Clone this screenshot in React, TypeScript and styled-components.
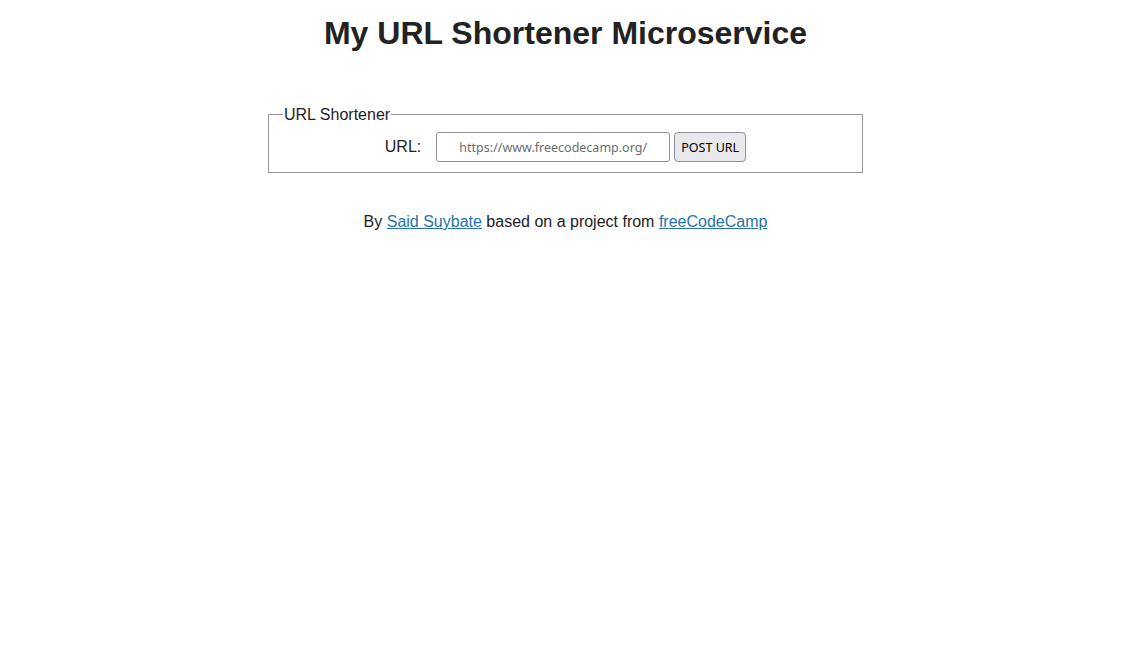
import React from "react";
import styled, { createGlobalStyle } from "styled-components";

const Global = createGlobalStyle`
  html, body { margin: 0; padding: 0; background: #ffffff; }
  body {
    font-family: "Liberation Sans", Arial, Helvetica, sans-serif;
    font-size: 16px;
    color: #222;
    text-align: center;
  }
`;

const Page = styled.div`
  display: flex;
  flex-direction: column;
  align-items: center;
  padding-top: 15px;
`;

const Title = styled.h1`
  margin: 0;
  font-size: 32px;
  line-height: 37px;
  font-weight: 700;
  color: #222;
`;

const Fieldset = styled.fieldset`
  box-sizing: border-box;
  width: 595px;
  margin: 52px 0 0;
  padding: 8px 0 10px;
  border: 1px solid #9a9a9a;
  display: flex;
  justify-content: center;
`;

const Legend = styled.legend`
  padding: 2px 1px 0;
  margin-left: 14px;
  font-size: 16px;
  line-height: 18px;
  color: #222;
  text-align: left;
`;

const Form = styled.form`
  display: flex;
  align-items: center;
  gap: 4px;
  margin: 0;
`;

const Label = styled.label`
  font-size: 16px;
  color: #222;
  margin-right: 11px;
`;

const Input = styled.input`
  box-sizing: border-box;
  width: 234px;
  height: 30px;
  padding: 5px 10px;
  border: 1px solid #8f8f9d;
  border-radius: 3px;
  font-family: "Noto Sans", sans-serif;
  font-size: 12.5px;
  text-align: center;
  color: #222;
  background: #fff;
  &::placeholder { color: #6d6d6d; }
`;

const Button = styled.button`
  box-sizing: border-box;
  height: 30px;
  width: 72px;
  padding: 0 6px;
  border: 1px solid #8f8f9d;
  border-radius: 4px;
  background: #e9e9ed;
  font-family: "Noto Sans", sans-serif;
  font-size: 12.5px;
  color: #000;
`;

const Footer = styled.p`
  margin: 40px 0 0;
  font-size: 16px;
  line-height: 18px;
  color: #222;
`;

const Link = styled.a`
  color: #2574a9;
`;

export default function App() {
  return (
    <>
      <Global />
      <Page>
        <Title>My URL Shortener Microservice</Title>
        <Fieldset>
          <Legend>URL Shortener</Legend>
          <Form onSubmit={(e) => e.preventDefault()}>
            <Label htmlFor="url_input">URL:</Label>
            <Input id="url_input" type="text" placeholder="https://www.freecodecamp.org/" />
            <Button type="submit">POST URL</Button>
          </Form>
        </Fieldset>
        <Footer>
          By <Link href="#">Said Suybate</Link> based on a project from{" "}
          <Link href="#">freeCodeCamp</Link>
        </Footer>
      </Page>
    </>
  );
}
